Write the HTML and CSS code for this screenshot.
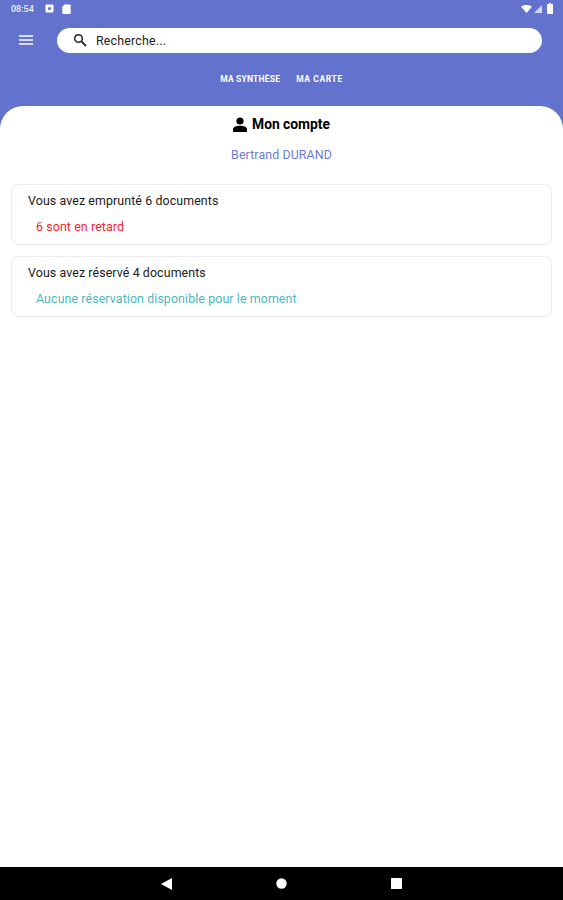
FILE: index.html
```html
<!DOCTYPE html>
<html lang="fr">
<head>
<meta charset="utf-8">
<title>Mon compte</title>
<link rel="stylesheet" href="styles.css">
</head>
<body>
<div class="app">
  <header class="header">
    <div class="status">
      <div class="status-left">
        <span class="time">08:54</span>
        <svg class="st-ic" width="9" height="9" viewBox="0 0 9 9"><rect x="0.5" y="0.5" width="8" height="8" rx="1" fill="#fff"/><circle cx="4.5" cy="4.5" r="1.6" fill="#6373cd"/></svg>
        <svg class="st-ic" width="9" height="10" viewBox="0 0 9 10"><path d="M2.5 0.5H8a.7.7 0 0 1 .7.7v8a.7.7 0 0 1-.7.7H1a.7.7 0 0 1-.7-.7V2.8z" fill="#fff"/></svg>
      </div>
      <div class="status-right">
        <svg width="11" height="8" viewBox="0 0 11 8"><path d="M0 1.6C3-.5 8-.5 11 1.6L5.5 8z" fill="#fff"/></svg>
        <svg width="8" height="8" viewBox="0 0 8 8"><path d="M8 0V8H0z" fill="#fff" opacity=".7"/></svg>
        <svg class="batt" width="6" height="11" viewBox="0 0 6 11"><path d="M2 0H4V1H5.4a.6.6 0 0 1 .6.6V10.4a.6.6 0 0 1-.6.6H.6a.6.6 0 0 1-.6-.6V1.6A.6.6 0 0 1 .6 1H2z" fill="#fff"/></svg>
      </div>
    </div>
    <div class="toolbar">
      <button class="menu" aria-label="Menu">
        <svg width="14" height="10" viewBox="0 0 14 10"><path d="M0 1H14M0 5H14M0 9H14" stroke="#fff" stroke-width="1.4"/></svg>
      </button>
      <div class="search">
        <svg width="14" height="14" viewBox="0 0 14 14"><circle cx="5.5" cy="5.5" r="3.8" fill="none" stroke="#222" stroke-width="1.5"/><path d="M8.4 8.4L13 13" stroke="#222" stroke-width="1.8"/></svg>
        <span>Recherche...</span>
      </div>
    </div>
    <nav class="tabs">
      <span>MA SYNTHÈSE</span>
      <span class="tab-wide">MA CARTE</span>
    </nav>
  </header>
  <main class="sheet">
    <h1 class="title">
      <svg width="14" height="15" viewBox="0 0 14 15"><circle cx="7" cy="4" r="3.6" fill="#000"/><path d="M0 15V12.2C0 9.8 3.5 8.7 7 8.7S14 9.8 14 12.2V15z" fill="#000"/></svg>
      Mon compte
    </h1>
    <p class="name">Bertrand DURAND</p>
    <section class="card">
      <p class="card-title">Vous avez emprunté 6 documents</p>
      <p class="card-sub late">6 sont en retard</p>
    </section>
    <section class="card">
      <p class="card-title">Vous avez réservé 4 documents</p>
      <p class="card-sub none">Aucune réservation disponible pour le moment</p>
    </section>
  </main>
  <footer class="navbar">
    <svg width="11" height="12" viewBox="0 0 11 12"><path d="M11 0V12L0 6z" fill="#fff"/></svg>
    <svg width="11" height="11" viewBox="0 0 11 11"><circle cx="5.5" cy="5.5" r="5.2" fill="#fff"/></svg>
    <svg width="11" height="11" viewBox="0 0 11 11"><rect width="11" height="11" rx="0.5" fill="#fff"/></svg>
  </footer>
</div>
</body>
</html>
```
FILE: styles.css
```css
* { box-sizing: border-box; }
html, body { margin: 0; padding: 0; }
body { font-family: Roboto, "Liberation Sans", sans-serif; background: #fff; }
p, h1 { margin: 0; }
.app { width: 563px; height: 900px; display: flex; flex-direction: column; overflow: hidden; background: #6373cd; }
.header { height: 106px; flex: none; color: #fff; }
.status { height: 17px; padding: 0 10px 0 11px; display: flex; justify-content: space-between; align-items: center; }
.status-left { display: flex; align-items: center; gap: 8px; }
.time { font-size: 9px; font-weight: 500; opacity: .9; width: 26px; }
.status-right { display: flex; align-items: center; gap: 2px; }
.batt { margin-left: 3px; }
.toolbar { height: 26px; margin-top: 10px; padding: 0 21px 0 19px; display: flex; align-items: center; }
.menu { width: 14px; height: 10px; padding: 0; border: 0; background: none; display: flex; margin-right: 24px; }
.search { flex: 1; height: 25px; background: #fff; border-radius: 12.5px; display: flex; align-items: center; padding-left: 16px; gap: 9px; color: #222; font-size: 12.4px; letter-spacing: .2px; }
.tabs { margin-top: 21px; display: flex; justify-content: center; gap: 16px; font-size: 8.5px; font-weight: 700; letter-spacing: .2px; }
.tab-wide { letter-spacing: .6px; }
.sheet { flex: 1; background: #fff; border-radius: 23px 23px 0 0; padding: 9px 11px 0; }
.title { display: flex; justify-content: center; align-items: center; gap: 5px; font-size: 13.8px; font-weight: 700; line-height: 19px; color: #000; }
.name { margin-top: 13px; text-align: center; font-size: 12.4px; line-height: 15px; color: #6d7bcf; letter-spacing: .1px; }
.card { height: 61px; margin-top: 11px; padding: 8px 16px 0; border: 1px solid #ececec; border-radius: 8px; background: #fff; box-shadow: 0 1px 1px rgba(0,0,0,.03); }
.name + .card { margin-top: 22px; }
.card-title { font-size: 12.4px; line-height: 15px; color: #1a1a1a; letter-spacing: .1px; }
.card-sub { margin-top: 11px; padding-left: 8px; font-size: 12.4px; line-height: 15px; letter-spacing: .1px; }
.late { color: #f7252f; }
.none { color: #4db8bd; }
.navbar { height: 33px; flex: none; background: #000; display: flex; align-items: center; justify-content: center; gap: 104px; }
```
